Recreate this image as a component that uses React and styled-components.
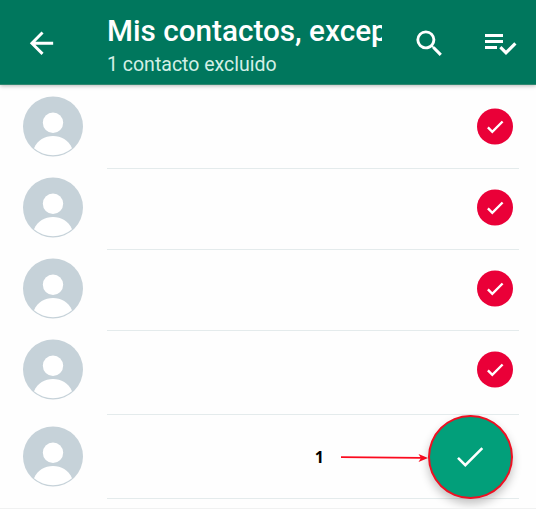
import styled, { createGlobalStyle } from "styled-components";

const contacts = [
  { id: 1, height: 84, top: 11, excluded: true },
  { id: 2, height: 81, top: 8, excluded: true },
  { id: 3, height: 81, top: 8, excluded: true },
  { id: 4, height: 84, top: 8, excluded: true },
  { id: 5, height: 84, top: 11, excluded: false },
];

function Avatar() {
  return (
    <svg width="60" height="61" viewBox="0 -0.5 60 61">
      <circle cx="30" cy="30" r="30" fill="#c6d2d9" />
      <circle cx="30" cy="26.3" r="10.2" fill="#fff" />
      <path
        d="M11 51.8C14.6 43.6 21.8 39.6 30 39.6S45.4 43.6 49 51.8A29.2 29.2 0 0 1 11 51.8Z"
        fill="#fff"
      />
    </svg>
  );
}

function App() {
  return (
    <Wrapper>
      <GlobalStyle />

      {/* header */}
      <Header>
        <IconButton aria-label="Atrás">
          <svg width="35" height="36" viewBox="0 -0.5 24 24.7" fill="currentColor">
            <path d="M20 11H7.83l5.59-5.59L12 4l-8 8 8 8 1.41-1.41L7.83 13H20v-2z" />
          </svg>
        </IconButton>
        <Titles>
          <h1>Mis contactos, excep</h1>
          <p>1 contacto excluido</p>
        </Titles>
        <Actions>
          <IconButton aria-label="Buscar">
            <svg width="35" height="35" viewBox="0 0 24 24" fill="currentColor">
              <path d="M15.5 14h-.79l-.28-.27A6.471 6.471 0 0 0 16 9.5 6.5 6.5 0 1 0 9.5 16c1.61 0 3.09-.59 4.23-1.57l.27.28v.79l5 4.99L20.49 19l-4.99-5zm-6 0C7.01 14 5 11.99 5 9.5S7.01 5 9.5 5 14 7.01 14 9.5 11.99 14 9.5 14z" />
            </svg>
          </IconButton>
          <IconButton aria-label="Seleccionar todo">
            <svg width="36" height="36" viewBox="0 0 24 24" fill="currentColor">
              <path d="M14 10H2v2h12v-2zm0-4H2v2h12V6zM2 16h8v-2H2v2zm19.5-4.5L23 13l-6.99 7-4.51-4.5L13 14l3.01 3 5.49-5.5z" />
            </svg>
          </IconButton>
        </Actions>
      </Header>

      {/* contacts */}
      <List>
        {contacts.map(({ id, height, top, excluded }) => (
          <Row key={id} $height={height} $top={top}>
            <Avatar />
            <Details>
              {excluded && (
                <Badge width="36" height="37" viewBox="0 -0.5 36 37">
                  <circle cx="18" cy="18" r="18" fill="#ea0038" />
                  <path
                    d="M10.9 18.9L15.3 23.3L25.6 13"
                    fill="none"
                    stroke="#fff"
                    strokeWidth="2.4"
                  />
                </Badge>
              )}
            </Details>
          </Row>
        ))}
      </List>

      {/* confirm button with its callout */}
      <Callout>
        <span>1</span>
        <svg width="87" height="12" viewBox="0 0 87 12">
          <path d="M0 6.1L80 6.9" stroke="#fb0a1e" strokeWidth="1.8" />
          <path d="M87 7L77.5 2.9L80 6.9L77.5 10.9Z" fill="#fb0a1e" />
        </svg>
        <Confirm aria-label="Confirmar">
          <svg width="28" height="22" viewBox="0 0 28 22">
            <path
              d="M2 11.9L9.3 19.2L26.3 2.2"
              fill="none"
              stroke="#fff"
              strokeWidth="2.6"
            />
          </svg>
        </Confirm>
      </Callout>
    </Wrapper>
  );
}

const GlobalStyle = createGlobalStyle`
  * {
    box-sizing: border-box;
  }

  body {
    margin: 0;
    background: #fff;
    font-family: Roboto, "Liberation Sans", sans-serif;
  }

  h1, p {
    margin: 0;
  }

  svg {
    display: block;
    flex-shrink: 0;
  }
`;

const Wrapper = styled.main`
  position: relative;
  width: 536px;
  height: 509px;
  overflow: hidden;
  background: #fefefe;
  border-bottom: 1px solid #f0f1f1;
`;

const Header = styled.header`
  display: flex;
  align-items: flex-start;
  height: 85px;
  padding: 25px 18px 0 24px;
  background: #00775d;
  border-bottom: 1px solid #2f8770;
  color: #fff;
  box-shadow: 0 1px 4px rgba(0, 0, 0, 0.28);
`;

const IconButton = styled.button`
  padding: 0;
  border: 0;
  background: none;
  color: inherit;
`;

const Titles = styled.div`
  width: 275px;
  margin: -12px 0 0 48px;
  overflow: hidden;
  white-space: nowrap;

  h1 {
    font-size: 29.7px;
    line-height: 36px;
    font-weight: 500;
  }

  p {
    margin-top: 4px;
    font-size: 19.5px;
    line-height: 24px;
    color: #d3efe6;
  }
`;

const Actions = styled.div`
  display: flex;
  gap: 35px;
  margin-left: auto;
`;

const List = styled.div`
  display: flex;
  flex-direction: column;
`;

const Row = styled.div`
  display: flex;
  align-items: flex-start;
  gap: 24px;
  height: ${({ $height }) => $height}px;
  padding: 0 17px 0 23px;

  & > svg {
    margin-top: ${({ $top }) => $top}px;
  }

  & > div {
    padding-top: ${({ $top }) => $top + 12}px;
  }
`;

const Details = styled.div`
  flex: 1;
  height: 100%;
  padding-right: 6px;
  border-bottom: 1px solid #e4ebec;
`;

const Badge = styled.svg`
  margin-left: auto;
`;

const Callout = styled.div`
  position: absolute;
  right: 23.5px;
  bottom: 9px;
  display: flex;
  align-items: center;

  span {
    margin-right: 17px;
    font: 700 16px/20px "Open Sans", sans-serif;
    color: #000;
  }
`;

const Confirm = styled.button`
  display: flex;
  align-items: center;
  justify-content: center;
  width: 84.5px;
  height: 84px;
  padding: 0;
  border: 2px solid #ee1022;
  border-radius: 50%;
  background: #029f7a;
  box-shadow: 0 5px 10px rgba(0, 0, 0, 0.24);
`;

export default App;
